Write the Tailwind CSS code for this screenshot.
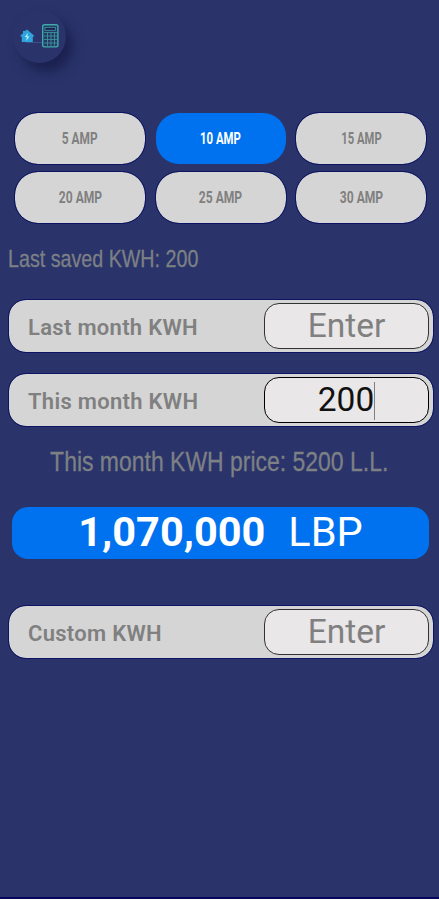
<!DOCTYPE html>
<html lang="en">
<head>
    <meta charset="UTF-8">
    <title>KWH Calculator</title>
    <script src="https://cdn.jsdelivr.net/npm/@tailwindcss/browser@4"></script>
</head>
<body class="bg-white font-['Roboto',sans-serif]">
<div class="h-[899px] bg-[#2a346a] border-b-2 border-[#05075c] overflow-hidden">
    <!-- Logo -->
    <header class="h-[113px] pt-[10px] pl-[13px]">
        <div class="w-[53px] h-[53px] rounded-full bg-[#2a346a] shadow-[7px_9px_12px_#1b2150]">
            <svg class="w-[53px] h-[53px]" viewBox="0 0 53 53" fill="none">
                <path d="M13 32.5h16" stroke="#3a5b91" stroke-width=".8"/>
                <path d="M14 19.5l7.5 6.5-1.7.8v5.2H8.8v-5.2L7 26l3-2.7v-2.3h2z" fill="#2fa4dc"/>
                <path d="M14.8 23l-3 4h2l-.6 4 3.2-4.6h-2z" fill="#b5efff"/>
                <rect x="29.7" y="14.7" width="15.2" height="22.2" rx="1.8" fill="#253967" stroke="#3faaa9" stroke-width="1.4"/>
                <rect x="32" y="17.3" width="10.6" height="3" fill="#202653" stroke="#3faaa9" stroke-width=".7"/>
                <path d="M31 22.5h13M31 26h13M31 29.5h13M31 33h13M34.5 22v14M38 22v14M41.5 22v14" stroke="#3b9ba0" stroke-width=".8"/>
            </svg>
        </div>
    </header>

    <!-- Subscription size -->
    <div class="grid grid-cols-3 gap-x-[10.5px] gap-y-[7.5px] pl-[15px] pr-[13px] text-[17px] font-bold text-[#808080]">
        <button class="h-[51px] rounded-[23px] bg-[#d5d5d5] outline outline-[#0e1462]"><span class="inline-block scale-x-[.7]">5 AMP</span></button>
        <button class="h-[51px] rounded-[23px] bg-[#0072ef] text-white"><span class="inline-block scale-x-[.67]">10 AMP</span></button>
        <button class="h-[51px] rounded-[23px] bg-[#d5d5d5] outline outline-[#0e1462]"><span class="inline-block scale-x-[.66]">15 AMP</span></button>
        <button class="h-[51px] pt-[2px] rounded-[23px] bg-[#d5d5d5] outline outline-[#0e1462]"><span class="inline-block scale-x-[.71]">20 AMP</span></button>
        <button class="h-[51px] pt-[2px] rounded-[23px] bg-[#d5d5d5] outline outline-[#0e1462]"><span class="inline-block scale-x-[.71]">25 AMP</span></button>
        <button class="h-[51px] pt-[2px] rounded-[23px] bg-[#d5d5d5] outline outline-[#0e1462]"><span class="inline-block scale-x-[.71]">30 AMP</span></button>
    </div>

    <p class="mt-[20px] ml-[8px] h-[32px] leading-[32px] font-['Liberation_Sans',sans-serif] text-[24px] text-[#7d8085] [-webkit-text-stroke:.3px] whitespace-nowrap"><span class="inline-block origin-left scale-x-[.82]">Last saved KWH: 200</span></p>

    <!-- Readings -->
    <div class="mt-[25px] ml-[9px] w-[424px] h-[52px] rounded-[17px] bg-[#d5d5d5] outline outline-[#0e1462] flex items-center justify-between pl-[19px] pr-[4px]">
        <span class="text-[22px] font-semibold tracking-[.3px] text-[#808080] pt-[3px]">Last month KWH</span>
        <div class="w-[165px] h-[46px] rounded-[15px] border-[1.5px] border-[#333] bg-[#e9e7e8] flex items-center justify-center pt-[2px] text-[33.5px] text-[#808080]">Enter</div>
    </div>
    <div class="mt-[22px] ml-[9px] w-[424px] h-[52px] rounded-[17px] bg-[#d5d5d5] outline outline-[#0e1462] flex items-center justify-between pl-[19px] pr-[4px]">
        <span class="text-[22px] font-semibold tracking-[.3px] text-[#808080] pt-[3px]">This month KWH</span>
        <div class="w-[165px] h-[46px] rounded-[15px] border-[1.5px] border-black bg-[#e9e7e8] flex items-center justify-center pt-[2px] text-[33.5px] text-[#111]">200<span class="w-px h-[38px] bg-[#808080]"></span></div>
    </div>

    <p class="mt-[16px] h-[40px] leading-[40px] font-['Liberation_Sans',sans-serif] text-[28px] text-[#7d8085] [-webkit-text-stroke:.3px] text-center whitespace-nowrap"><span class="inline-block scale-x-[.82]">This month KWH price: 5200 L.L.</span></p>

    <!-- Total -->
    <div class="mt-[25px] ml-[12px] w-[417px] h-[52px] rounded-[16px] bg-[#0072ef] flex items-center justify-center gap-[23px] text-white text-[41.5px] whitespace-pre"><span class="font-bold">1,070,000</span><span>LBP</span></div>

    <div class="mt-[47px] ml-[9px] w-[424px] h-[52px] rounded-[17px] bg-[#d5d5d5] outline outline-[#0e1462] flex items-center justify-between pl-[19px] pr-[4px]">
        <span class="text-[22px] font-semibold tracking-[.3px] text-[#808080] pt-[4px]">Custom KWH</span>
        <div class="w-[165px] h-[46px] rounded-[15px] border-[1.5px] border-[#333] bg-[#e9e7e8] flex items-center justify-center pt-[2px] text-[33.5px] text-[#808080]">Enter</div>
    </div>
</div>
</body>
</html>
